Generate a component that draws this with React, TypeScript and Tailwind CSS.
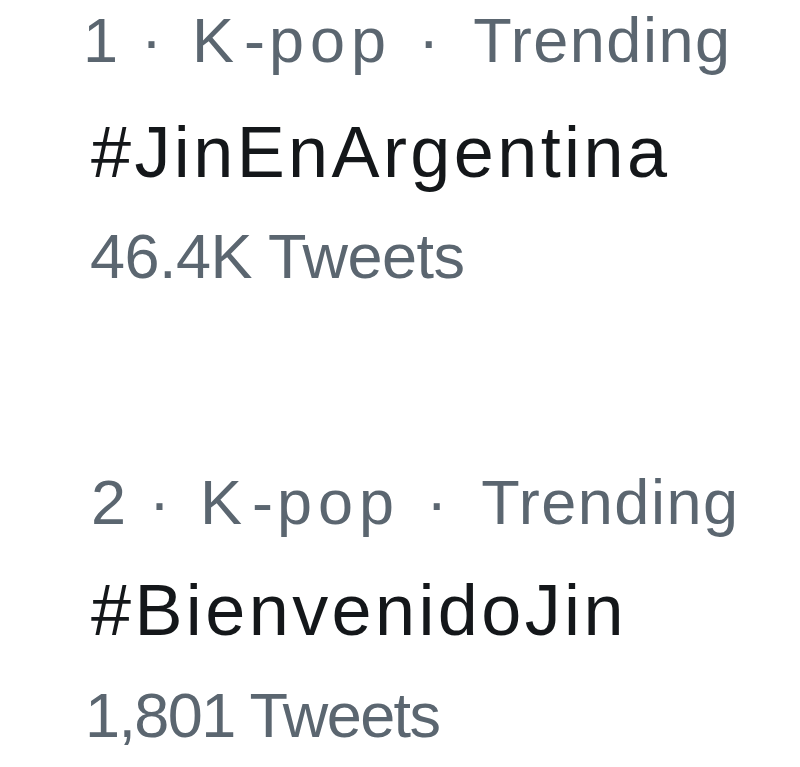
import React from "react";

type Trend = {
  rank: number;
  tag: string;
  count: string;
  rankOffset: string;
  countOffset: string;
  countTracking: string;
  blockPad: string;
  headMt: string;
  countMt: string;
};

const trends: Trend[] = [
  {
    rank: 1,
    tag: "#JinEnArgentina",
    count: "46.4K Tweets",
    rankOffset: "ml-[-7px]",
    countOffset: "ml-[0px]",
    countTracking: "tracking-[-0.5px]",
    blockPad: "pt-[9px]",
    headMt: "mt-[44px]",
    countMt: "mt-[37px]",
  },
  {
    rank: 2,
    tag: "#BienvenidoJin",
    count: "1,801 Tweets",
    rankOffset: "ml-[1px]",
    countOffset: "ml-[-5px]",
    countTracking: "tracking-[-1.6px]",
    blockPad: "pt-[183px]",
    headMt: "mt-[40px]",
    countMt: "mt-[38px]",
  },
];

function TrendItem({ t }: { t: Trend }) {
  return (
    <div className={`flex flex-col ${t.blockPad}`}>
      <div
        className={`flex items-baseline text-[63px] leading-[63px] h-[63px] text-[#5b6670] whitespace-nowrap ${t.rankOffset}`}
      >
        <span>{t.rank}</span>
        <span className="ml-[23px]">·</span>
        <span className="ml-[30px]">K</span>
        <span className="ml-[10px]">-</span>
        <span className="ml-[4px] tracking-[6px]">pop</span>
        <span className="ml-[26px]">·</span>
        <span className="ml-[34px] tracking-[1.5px]">Trending</span>
      </div>
      <div
        className={`${t.headMt} ml-[1px] text-[72px] leading-[72px] h-[72px] tracking-[3.4px] text-[#14171a] whitespace-nowrap`}
      >
        {t.tag}
      </div>
      <div
        className={`${t.countMt} ${t.countOffset} ${t.countTracking} text-[63px] leading-[63px] h-[63px] text-[#5b6670] whitespace-nowrap`}
      >
        {t.count}
      </div>
    </div>
  );
}

export default function App() {
  return (
    <div
      className="w-[800px] h-[767px] bg-white pl-[90px] overflow-hidden"
      style={{ fontFamily: "'Liberation Sans', Arial, sans-serif" }}
    >
      {trends.map((t) => (
        <TrendItem key={t.rank} t={t} />
      ))}
    </div>
  );
}
